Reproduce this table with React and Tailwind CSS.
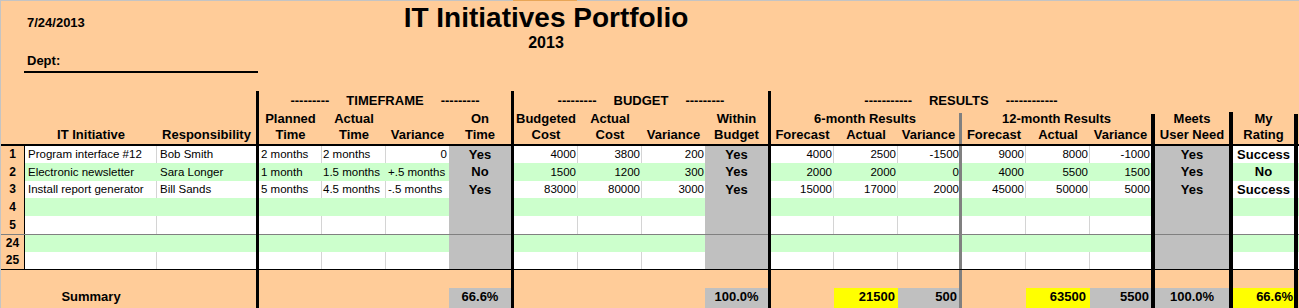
const GRID =
  "grid grid-cols-[24px_132px_99px_3px_63px_64px_63px_62px_3px_64px_64px_63px_63px_3px_63px_64px_61px_3px_64px_64px_61px_4px_74px_4px_61px_4px_1fr]";

const topRows = [
  { n: "1", h: 17, v: ["Program interface #12", "Bob Smith", "2 months", "2 months", "0", "Yes", "4000", "3800", "200", "Yes", "4000", "2500", "-1500", "9000", "8000", "-1000", "Yes", "Success"] },
  { n: "2", h: 18, green: true, v: ["Electronic newsletter", "Sara Longer", "1 month", "1.5 months", "+.5 months", "No", "1500", "1200", "300", "Yes", "2000", "2000", "0", "4000", "5500", "1500", "Yes", "No"] },
  { n: "3", h: 17, v: ["Install report generator", "Bill Sands", "5 months", "4.5 months", "-.5 months", "Yes", "83000", "80000", "3000", "Yes", "15000", "17000", "2000", "45000", "50000", "5000", "Yes", "Success"] },
  { n: "4", h: 18, green: true },
  { n: "5", h: 18 },
];

const lateRows = [
  { n: "24", h: 17, green: true },
  { n: "25", h: 17 },
];

function Group({ span, left, label, right }) {
  return (
    <div className={`${span} flex justify-center gap-[17px] pt-[2px] whitespace-nowrap`}>
      <span>{left}</span>
      <span>{label}</span>
      <span>{right}</span>
    </div>
  );
}

// row of only the border columns (used for separators / blank summary gap)
function Spacer({ h, color = "" }) {
  return (
    <div className={`${GRID} ${h}`}>
      <div className={`col-span-3 ${color}`} />
      <div className="bg-black" />
      <div className={`col-span-4 ${color}`} />
      <div className="bg-black" />
      <div className={`col-span-4 ${color}`} />
      <div className="bg-black" />
      <div className={`col-span-3 ${color}`} />
      <div className="bg-[#808080]" />
      <div className={`col-span-3 ${color}`} />
      <div className="bg-black" />
      <div className={color} />
      <div className="bg-black" />
      <div className={color} />
      <div className="bg-black" />
      <div className={color} />
    </div>
  );
}

function DataRow({ n, h, green, v = [] }) {
  const bg = green ? "bg-[#ccffcc]" : "bg-white";
  const gl = green ? "border-transparent" : "border-[#d4d4d4]";
  const size = h === 18 ? "h-[18px] leading-[18px]" : "h-[17px] leading-[17px]";
  const num = `${bg} text-right whitespace-nowrap`;
  const flag = "bg-[#c0c0c0] text-center font-bold text-[13px]";
  const varIsNum = /^-?\d+$/.test(v[4] || "");

  return (
    <div className={`${GRID} ${size} text-[11.5px]`}>
      <div className="bg-[#ffcc99] border-r border-black text-center font-bold text-[12px]">{n}</div>
      <div className={`${bg} border-r ${gl} pl-[3px] whitespace-nowrap overflow-hidden`}>{v[0]}</div>
      <div className={`${bg} pl-[3px] whitespace-nowrap`}>{v[1]}</div>
      <div className="bg-black" />
      <div className={`${bg} border-r ${gl} pl-[2px] whitespace-nowrap`}>{v[2]}</div>
      <div className={`${bg} border-r ${gl} pl-[1px] whitespace-nowrap`}>{v[3]}</div>
      <div className={`${bg} whitespace-nowrap ${varIsNum ? "text-right pr-[2px]" : "pl-[2px]"}`}>{v[4]}</div>
      <div className={flag}>{v[5]}</div>
      <div className="bg-black" />
      <div className={`${num} border-r ${gl} pr-[1px]`}>{v[6]}</div>
      <div className={`${num} border-r ${gl} pr-[1px]`}>{v[7]}</div>
      <div className={`${num} pr-[1px]`}>{v[8]}</div>
      <div className={flag}>{v[9]}</div>
      <div className="bg-black" />
      <div className={`${num} border-r ${gl} pr-[1px]`}>{v[10]}</div>
      <div className={`${num} border-r ${gl} pr-[1px]`}>{v[11]}</div>
      <div className={`${num} pr-0`}>{v[12]}</div>
      <div className="bg-[#808080]" />
      <div className={`${num} border-r ${gl} pr-[1px]`}>{v[13]}</div>
      <div className={`${num} border-r ${gl} pr-[1px]`}>{v[14]}</div>
      <div className={`${num} pr-[1px]`}>{v[15]}</div>
      <div className="bg-black" />
      <div className={flag}>{v[16]}</div>
      <div className="bg-black" />
      <div className={`${bg} text-center font-bold text-[13px]`}>{v[17]}</div>
      <div className="bg-black" />
      <div className={bg} />
    </div>
  );
}

export default function App() {
  return (
    <div className="w-[1299px] h-[308px] overflow-hidden bg-[#ffcc99] text-black font-['Liberation_Sans',Arial,sans-serif]">
      {/* top edge */}
      <div className="flex h-[1px]">
        <div className="w-[513px] bg-[#c4c4c4]" />
        <div className="w-[64px] bg-[#e8a657]" />
        <div className="flex-1 bg-[#c4c4c4]" />
      </div>

      <div className="border-l border-[#c4c4c4]">
        {/* title block */}
        <div className="grid grid-cols-[258px_574px_1fr] h-[90px]">
          <div className="font-bold text-[13px] leading-[16px]">
            <div className="pt-[14px] pl-[26px]">7/24/2013</div>
            <div className="mt-[22px] ml-[23px] w-[234px] pl-[3px] pb-[2px] border-b-2 border-black">Dept:</div>
          </div>
          <div className="text-center font-bold">
            <div className="pt-[1px] text-[28px] leading-[32px]">IT Initiatives Portfolio</div>
            <div className="text-[16px] leading-[18px]">2013</div>
          </div>
          <div />
        </div>

        {/* header */}
        <div className={`${GRID} h-[20px] font-bold text-[13px] leading-[16px]`}>
          <div className="col-span-3" />
          <div className="bg-black" />
          <Group span="col-span-4" left="---------" label="TIMEFRAME" right="---------" />
          <div className="bg-black" />
          <Group span="col-span-4" left="---------" label="BUDGET" right="---------" />
          <div className="bg-black" />
          <Group span="col-span-7" left="-----------" label="RESULTS" right="------------" />
          <div className="col-span-6" />
        </div>

        <div className={`${GRID} h-[16px] font-bold text-[13px] leading-[16px] text-center whitespace-nowrap`}>
          <div className="col-span-3" />
          <div className="bg-black" />
          <div>Planned</div>
          <div>Actual</div>
          <div />
          <div>On</div>
          <div className="bg-black" />
          <div>Budgeted</div>
          <div>Actual</div>
          <div />
          <div>Within</div>
          <div className="bg-black" />
          <div className="col-span-3">6-month Results</div>
          <div className="bg-[#808080] mt-[2px]" />
          <div className="col-span-3">12-month Results</div>
          <div className="bg-black mt-[3px]" />
          <div>Meets</div>
          <div className="bg-black mt-[1px]" />
          <div>My</div>
          <div className="bg-black mt-[3px]" />
          <div />
        </div>

        <div className={`${GRID} h-[17px] font-bold text-[13px] leading-[16px] text-center whitespace-nowrap`}>
          <div />
          <div>IT Initiative</div>
          <div>Responsibility</div>
          <div className="bg-black" />
          <div>Time</div>
          <div>Time</div>
          <div>Variance</div>
          <div>Time</div>
          <div className="bg-black" />
          <div>Cost</div>
          <div>Cost</div>
          <div>Variance</div>
          <div>Budget</div>
          <div className="bg-black" />
          <div>Forecast</div>
          <div>Actual</div>
          <div>Variance</div>
          <div className="bg-[#808080]" />
          <div>Forecast</div>
          <div>Actual</div>
          <div>Variance</div>
          <div className="bg-black" />
          <div>User Need</div>
          <div className="bg-black" />
          <div>Rating</div>
          <div className="bg-black" />
          <div />
        </div>

        <div className="h-[2px] bg-black" />

        {topRows.map((r) => (
          <DataRow key={r.n} {...r} />
        ))}

        <Spacer h="h-[1px]" color="bg-[#808080]" />

        {lateRows.map((r) => (
          <DataRow key={r.n} {...r} />
        ))}

        <div className="h-[1px] bg-black" />

        <Spacer h="h-[18px]" />

        {/* summary */}
        <div className={`${GRID} h-[20px] font-bold text-[13px] leading-[18px] whitespace-nowrap`}>
          <div />
          <div className="text-center">Summary</div>
          <div />
          <div className="bg-black" />
          <div className="col-span-3" />
          <div className="bg-[#c0c0c0] text-center">66.6%</div>
          <div className="bg-black" />
          <div className="col-span-3" />
          <div className="bg-[#c0c0c0] text-center">100.0%</div>
          <div className="bg-black" />
          <div />
          <div className="bg-[#ffff00] text-right pr-[3px]">21500</div>
          <div className="bg-[#c0c0c0] text-right pr-[2px]">500</div>
          <div className="bg-[#808080]" />
          <div />
          <div className="bg-[#ffff00] text-right pr-[4px]">63500</div>
          <div className="bg-[#c0c0c0] text-right pr-[2px]">5500</div>
          <div className="bg-black" />
          <div className="bg-[#c0c0c0] text-center">100.0%</div>
          <div className="bg-black" />
          <div className="bg-[#ffff00] text-right pr-[1px]">66.6%</div>
          <div className="bg-black" />
          <div />
        </div>
      </div>
    </div>
  );
}
